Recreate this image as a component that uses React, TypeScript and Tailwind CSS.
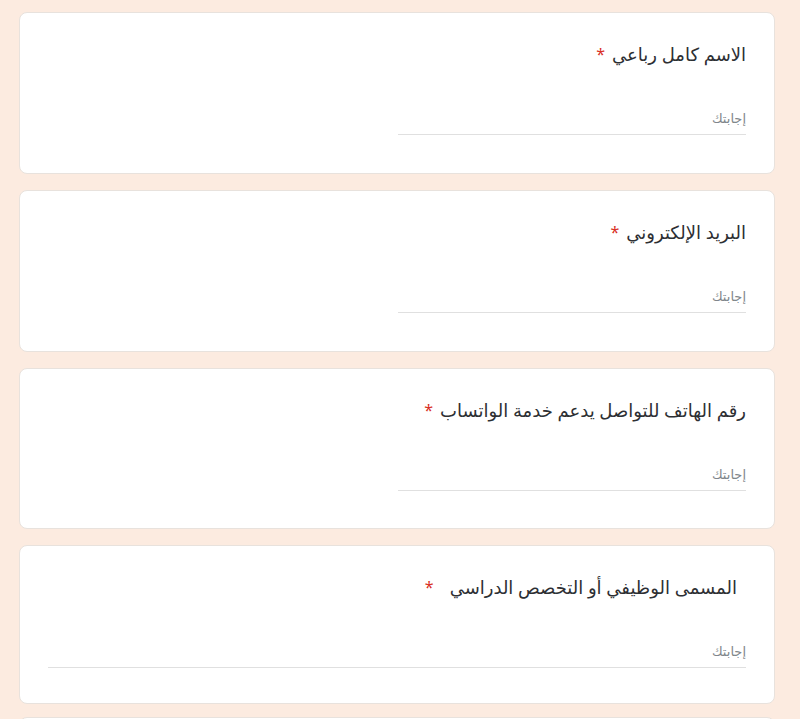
import React from 'react';

interface Question {
  title: string;
  wide?: boolean;
  padded?: boolean;
  pb: string;
}

const questions: Question[] = [
  { title: 'الاسم كامل رباعي', pb: 'pb-[38px]' },
  { title: 'البريد الإلكتروني', pb: 'pb-[38px]' },
  { title: 'رقم الهاتف للتواصل يدعم خدمة الواتساب', pb: 'pb-[37px]' },
  { title: 'المسمى الوظيفي أو التخصص الدراسي', wide: true, padded: true, pb: 'pb-[35px]' },
];

function QuestionCard({ q }: { q: Question }) {
  return (
    <div className={`bg-white border border-[#e8e2dd] rounded-[8px] pt-[29px] px-[28px] ${q.pb}`}>
      <div className={`flex items-center h-[24px] text-[18px] text-[#2d2f33] leading-[24px] ${q.padded ? 'pr-[9px]' : ''}`}>
        <span>{q.title}</span>
        <span className={`text-[16px] text-[#d93025] ${q.padded ? 'mr-[16px]' : 'mr-[7px]'}`}>*</span>
      </div>
      <div
        className={`mt-[38px] h-[31px] border-b border-[#e0e0e0] flex items-center text-[13px] text-[#80868b] ${
          q.wide ? 'w-full' : 'w-[348px]'
        }`}
      >
        إجابتك
      </div>
    </div>
  );
}

export default function App() {
  return (
    <div
      dir="rtl"
      className="min-h-screen bg-[#fcebe0] pt-[12px] pl-[19px] pr-[25px]"
      style={{ fontFamily: '"Noto Sans", "DejaVu Sans", sans-serif' }}
    >
      <div className="flex flex-col gap-[16px]">
        {questions.map((q, i) => (
          <QuestionCard key={i} q={q} />
        ))}
        <div className="-mt-[3px] bg-white border border-[#e8e2dd] rounded-[8px] h-[160px]" />
      </div>
    </div>
  );
}
